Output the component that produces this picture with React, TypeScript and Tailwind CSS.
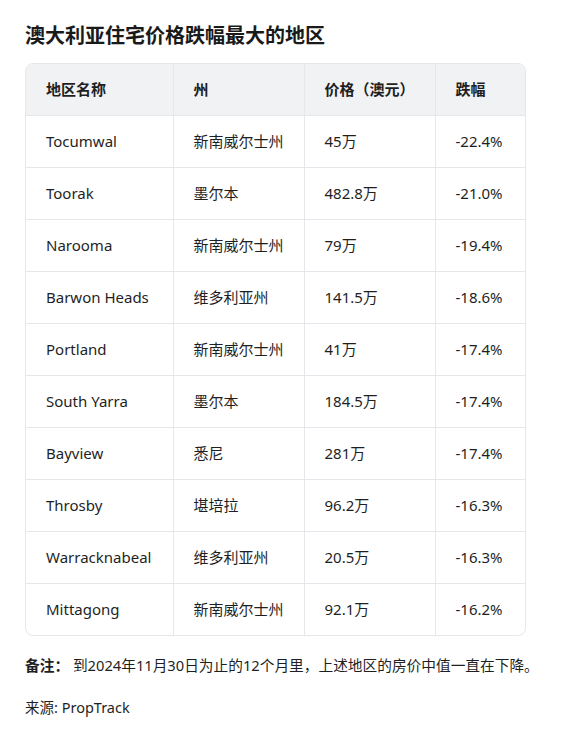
const rows = [
  ["Tocumwal", "新南威尔士州", "45万", "-22.4%"],
  ["Toorak", "墨尔本", "482.8万", "-21.0%"],
  ["Narooma", "新南威尔士州", "79万", "-19.4%"],
  ["Barwon Heads", "维多利亚州", "141.5万", "-18.6%"],
  ["Portland", "新南威尔士州", "41万", "-17.4%"],
  ["South Yarra", "墨尔本", "184.5万", "-17.4%"],
  ["Bayview", "悉尼", "281万", "-17.4%"],
  ["Throsby", "堪培拉", "96.2万", "-16.3%"],
  ["Warracknabeal", "维多利亚州", "20.5万", "-16.3%"],
  ["Mittagong", "新南威尔士州", "92.1万", "-16.2%"],
];

const headers = ["地区名称", "州", "价格（澳元）", "跌幅"];
const widths = ["w-[147px]", "w-[131px]", "w-[131px]", "w-[91px]"];

export default function App() {
  return (
    <div
      className="bg-white text-[#1f1f1f] px-[25px] pt-[22px] pb-6"
      style={{ fontFamily: '"Noto Sans", "Noto Sans CJK SC", sans-serif' }}
    >
      <h1 className="text-[20px] font-bold leading-7 text-[#1a1a1a]">澳大利亚住宅价格跌幅最大的地区</h1>
      <div className="mt-[13px] w-[501px] border border-[#e6e7ea] rounded-lg overflow-hidden">
        <table className="w-full border-collapse table-fixed text-[15px]">
          <thead>
            <tr className="bg-[#f1f2f4]">
              {headers.map((h, i) => (
                <th
                  key={i}
                  className={`${widths[i]} h-[51px] pl-[20px] text-left font-bold ${i > 0 ? "border-l border-[#e6e7ea]" : ""}`}
                >
                  {h}
                </th>
              ))}
            </tr>
          </thead>
          <tbody>
            {rows.map((r, ri) => (
              <tr key={ri} className="border-t border-[#e6e7ea]">
                {r.map((c, ci) => (
                  <td
                    key={ci}
                    className={`h-[52px] pl-[20px] ${ci > 0 ? "border-l border-[#e6e7ea]" : ""}`}
                  >
                    {c}
                  </td>
                ))}
              </tr>
            ))}
          </tbody>
        </table>
      </div>
      <p className="mt-[17px] text-[14.7px] leading-6 whitespace-nowrap">
        <span className="font-bold">备注：</span> 到2024年11月30日为止的12个月里，上述地区的房价中值一直在下降。
      </p>
      <p className="mt-[18px] text-[14.5px] leading-6">来源: PropTrack</p>
    </div>
  );
}
